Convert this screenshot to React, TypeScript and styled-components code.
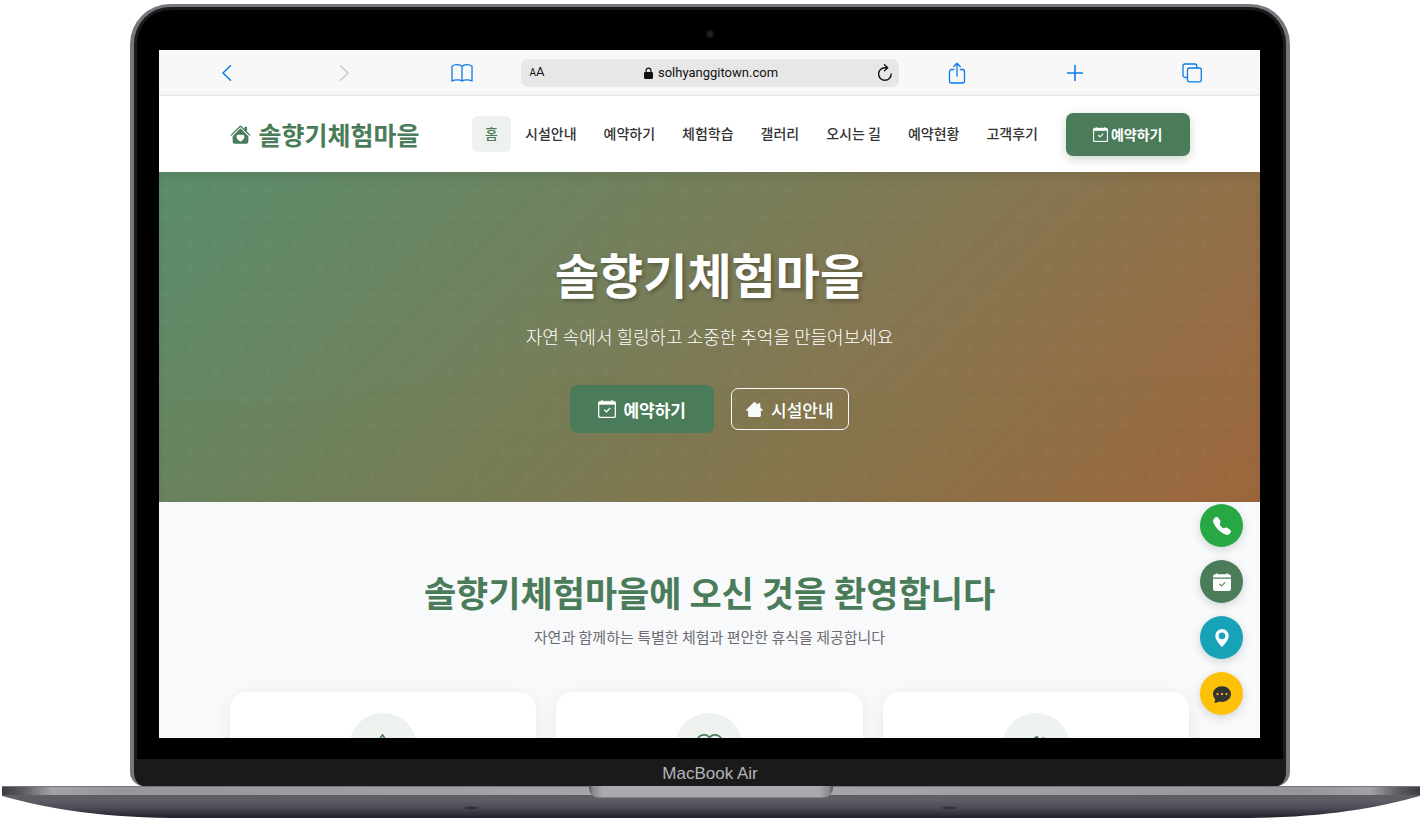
import React from 'react';
import styled, { createGlobalStyle, css } from 'styled-components';
import {
  BsCalendarCheck,
  BsCalendarCheckFill,
  BsChatDotsFill,
  BsGeoAltFill,
  BsHeart,
  BsHouseHeart,
  BsHouseHeartFill,
  BsTelephoneFill,
  BsTree,
} from 'react-icons/bs';

const green = '#4a7c59';
const blue = '#0a7aea';

const Global = createGlobalStyle`
  *, *::before, *::after { box-sizing: border-box; }
  body {
    margin: 0;
    background: #fff;
    color: #333;
    font-family: "Noto Sans CJK KR", "Noto Sans", sans-serif;
  }
  h1, h2, p { margin: 0; }
  button { font: inherit; border: 0; padding: 0; background: none; cursor: pointer; }
  a { color: inherit; text-decoration: none; }
  svg { display: block; flex: none; }
`;

/* ---------- laptop ---------- */

const Laptop = styled.div`
  display: flex;
  flex-direction: column;
  height: 100vh;
  min-height: 480px;
  padding: 4px 3px 3px 2px;
`;

const Lid = styled.div`
  flex: 1;
  min-height: 0;
  display: flex;
  flex-direction: column;
  margin: 0 130px 0 128px;
  border: solid #77777e;
  border-width: 3px 4px 0;
  border-radius: 40px 40px 14px 14px;
  background: #000;
  box-shadow: inset 0 0 0 3px #1b1b1e;
  overflow: hidden;
`;

const CameraBar = styled.div`
  height: 43px;
  flex: none;
  display: flex;
  align-items: center;
  justify-content: center;
  padding-top: 11px;
`;

const Camera = styled.span`
  width: 8px;
  height: 8px;
  border-radius: 50%;
  background: radial-gradient(circle, #26303a 0 1px, #15171a 2px 4px);
`;

const Screen = styled.div`
  flex: 1;
  min-height: 0;
  display: flex;
  flex-direction: column;
  margin: 0 26px 21px 25px;
  background: #fff;
  position: relative;
  overflow: hidden;
`;

const Chin = styled.div`
  height: 27px;
  flex: none;
  margin: 0 3px;
  background: #1a1a1a;
  border-radius: 0 0 12px 12px;
  text-align: center;
  color: #b4b4b9;
  font: 17px/30px "Liberation Sans", sans-serif;
`;

const Base = styled.div`
  height: 32px;
  flex: none;
  display: flex;
  justify-content: center;
  position: relative;
`;

const BaseShape = styled.svg`
  position: absolute;
  inset: 0;
  width: 100%;
  height: 100%;
`;

const Notch = styled.div`
  position: relative;
  width: 244px;
  height: 12px;
  border-radius: 0 0 10px 10px;
  background: linear-gradient(90deg, #55555b, #8a8a90 4px, #a9a9ae 14px, #a9a9ae 230px, #8a8a90 240px, #55555b);
  border-bottom: 1px solid #85858b;
`;

/* ---------- browser bar ---------- */

const BrowserBar = styled.div`
  flex: none;
  display: grid;
  grid-template-columns: repeat(3, 1fr) 378px repeat(3, 1fr);
  align-items: center;
  height: 46px;
  padding: 0 9px;
  background: #f8f8f8;
  border-bottom: 1px solid #ececec;
`;

const BarButton = styled.button<{ $muted?: boolean }>`
  display: flex;
  justify-content: center;
  color: ${(p) => (p.$muted ? '#c8c8ca' : blue)};
`;

const Address = styled.div`
  display: flex;
  align-items: center;
  justify-content: space-between;
  height: 28px;
  padding: 0 7px 0 9px;
  border-radius: 7px;
  background: #e7e7e7;
  color: #111;
  font: 13px/20px Roboto, sans-serif;
`;

const TextSize = styled.button`
  font-size: 13px;
  line-height: 20px;
  color: #111;
  small { font-size: 10px; }
`;

const Url = styled.span`
  display: flex;
  align-items: center;
  gap: 5px;
`;

const Reload = styled.button`
  color: #111;
`;

const line = {
  fill: 'none',
  stroke: 'currentColor',
  strokeLinecap: 'round' as const,
  strokeLinejoin: 'round' as const,
};

/* ---------- site ---------- */

const Container = styled.div`
  width: 100%;
  max-width: 960px;
  margin: 0 auto;
`;

const Header = styled.header`
  flex: none;
  background: #fff;
  position: relative;
  box-shadow: 0 2px 8px rgba(0, 0, 0, 0.12);
`;

const HeaderRow = styled(Container)`
  display: flex;
  align-items: center;
  justify-content: space-between;
  height: 76px;
`;

const Logo = styled.a`
  display: flex;
  align-items: center;
  gap: 8px;
  color: ${green};
  font-size: 25px;
  font-weight: 700;
  line-height: 36px;
`;

const Nav = styled.nav`
  display: flex;
  align-items: center;
  gap: 1px;
`;

const NavLink = styled.a<{ $active?: boolean }>`
  padding: 0 13px 2px;
  border-radius: 6px;
  font-size: 14px;
  font-weight: 500;
  line-height: 34px;
  white-space: nowrap;
  ${(p) => p.$active && css`
    color: ${green};
    background: #edf2ee;
  `}
`;

const Button = styled.button<{ $kind: 'header' | 'solid' | 'outline' }>`
  display: inline-flex;
  align-items: center;
  justify-content: center;
  color: #fff;
  border-radius: 7px;
  white-space: nowrap;
  ${(p) => p.$kind === 'header' && css`
    gap: 3px;
    height: 43px;
    margin-left: 14px;
    padding: 0 27px;
    background: ${green};
    font-size: 14px;
    font-weight: 700;
    box-shadow: 0 3px 10px rgba(74, 124, 89, 0.3);
  `}
  ${(p) => p.$kind === 'solid' && css`
    gap: 7px;
    height: 48px;
    padding: 0 28px;
    background: ${green};
    font-size: 17px;
    font-weight: 700;
  `}
  ${(p) => p.$kind === 'outline' && css`
    gap: 8px;
    height: 42px;
    padding: 0 14px;
    border: 1px solid #f8f9fa;
    font-size: 17px;
    font-weight: 500;
  `}
`;

const Hero = styled.section`
  flex: none;
  position: relative;
  display: flex;
  flex-direction: column;
  align-items: center;
  padding: 66px 16px 69px;
  background: linear-gradient(135deg, #5a8d6b, #7c7b56 50%, #a1663d);
  color: #fff;
  text-align: center;
  box-shadow: inset 0 4px 8px rgba(0, 0, 0, 0.08);
`;

const HeroArt = styled.svg`
  position: absolute;
  inset: 0;
  width: 100%;
  height: 100%;
`;

const HeroTitle = styled.h1`
  position: relative;
  font-size: 48px;
  font-weight: 700;
  line-height: 70px;
  text-shadow: 2px 2px 4px rgba(0, 0, 0, 0.3);
`;

const HeroText = styled.p`
  position: relative;
  margin-top: 14px;
  font-size: 18px;
  font-weight: 300;
  line-height: 28px;
`;

const Actions = styled.div`
  position: relative;
  display: flex;
  align-items: center;
  gap: 17px;
  margin-top: 35px;
`;

const Welcome = styled.section`
  flex: 1 0 auto;
  padding: 65px 0;
  background: #f8f9fb;
  text-align: center;
`;

const WelcomeTitle = styled.h2`
  color: ${green};
  font-size: 35px;
  font-weight: 700;
  line-height: 50px;
`;

const WelcomeText = styled.p`
  margin-top: 8px;
  color: #6c6c70;
  font-size: 15px;
  line-height: 24px;
`;

const Cards = styled.div`
  display: grid;
  grid-template-columns: repeat(3, 1fr);
  gap: 20px;
  margin-top: 43px;
`;

const Card = styled.article`
  display: flex;
  justify-content: center;
  height: 260px;
  padding-top: 21px;
  border-radius: 17px;
  background: #fff;
  box-shadow: 0 4px 17px rgba(0, 0, 0, 0.07);
`;

const CardIcon = styled.span`
  display: flex;
  align-items: center;
  justify-content: center;
  width: 68px;
  height: 68px;
  border-radius: 50%;
  background: #edf2ee;
  color: ${green};
`;

const Floating = styled.div`
  position: absolute;
  right: 17px;
  bottom: 23px;
  display: flex;
  flex-direction: column;
  gap: 13px;
`;

const Fab = styled.button<{ $bg: string; $dark?: boolean }>`
  display: flex;
  align-items: center;
  justify-content: center;
  width: 43px;
  height: 43px;
  border-radius: 50%;
  background: ${(p) => p.$bg};
  color: ${(p) => (p.$dark ? '#333' : '#fff')};
  box-shadow: 0 3px 10px rgba(0, 0, 0, 0.15);
`;

const links = ['홈', '시설안내', '예약하기', '체험학습', '갤러리', '오시는 길', '예약현황', '고객후기'];

export default function App() {
  return (
    <>
      <Global />
      <Laptop>
        <Lid>
          <CameraBar><Camera /></CameraBar>
          <Screen>
            <BrowserBar>
              <BarButton aria-label="뒤로">
                <svg width="20" height="20" viewBox="0 0 20 20" {...line} strokeWidth="1.5"><path d="M13.5 2.8 6 10l7.500 7.200" /></svg>
              </BarButton>
              <BarButton aria-label="앞으로" $muted>
                <svg width="20" height="20" viewBox="0 0 20 20" {...line} strokeWidth="1.5"><path d="M6.500 2.800 14 10l-7.500 7.200" /></svg>
              </BarButton>
              <BarButton aria-label="책갈피">
                <svg width="22" height="20" viewBox="0 0 22 20" {...line} strokeWidth="1.3"><path d="M11 3.400C9 1.200 3.500 1.200 1 3.200V18c2.500-1.600 8-1.600 10 0 2-1.600 7.500-1.600 10 0V3.200c-2.500-2-8-2-10 .2ZM11 3.400V18" /></svg>
              </BarButton>
              <Address>
                <TextSize aria-label="글자 크기"><small>A</small>A</TextSize>
                <Url>
                  <svg width="9" height="12" viewBox="0 0 9 12" fill="currentColor"><path d="M1.500 5V3.500a3 3 0 0 1 6 0V5h.3c.7 0 1.200.5 1.200 1.200v4.600c0 .7-.5 1.200-1.200 1.200H1.200C.5 12 0 11.500 0 10.800V6.200C0 5.500.5 5 1.200 5h.3Zm1.200 0h3.600V3.500a1.800 1.800 0 0 0-3.600 0V5Z" /></svg>
                  solhyanggitown.com
                </Url>
                <Reload aria-label="새로고침">
                  <svg width="14" height="18" viewBox="0 0 14 18" {...line} strokeWidth="1.4"><path d="M13.200 10A6.300 6.300 0 1 1 7 3.700h2.300M6.500.8l3.200 2.900-3.200 3" /></svg>
                </Reload>
              </Address>
              <BarButton aria-label="공유">
                <svg width="18" height="22" viewBox="0 0 18 22" {...line} strokeWidth="1.3"><path d="M5.800 7.500H3.500a2 2 0 0 0-2 2V19a2 2 0 0 0 2 2h11a2 2 0 0 0 2-2V9.500a2 2 0 0 0-2-2h-2.300M9 14V1.500M5.800 4.500 9 1.300l3.200 3.200" /></svg>
              </BarButton>
              <BarButton aria-label="새 탭">
                <svg width="18" height="18" viewBox="0 0 18 18" {...line} strokeWidth="1.600"><path d="M9 1.500v15M1.500 9h15" /></svg>
              </BarButton>
              <BarButton aria-label="탭 보기">
                <svg width="20" height="20" viewBox="0 0 20 20" {...line} strokeWidth="1.300"><rect x="5.500" y="5" width="13.800" height="13.800" rx="2" /><path d="M5.500 14.500H3a2 2 0 0 1-2-2V3a2 2 0 0 1 2-2h9.800a2 2 0 0 1 2 2v2" /></svg>
              </BarButton>
            </BrowserBar>

            <Header>
              <HeaderRow>
                <Logo href="#"><BsHouseHeartFill size={21} />솔향기체험마을</Logo>
                <Nav>
                  {links.map((label, i) => (
                    <NavLink key={label} href="#" $active={i === 0}>{label}</NavLink>
                  ))}
                  <Button $kind="header"><BsCalendarCheck size={15} strokeWidth={0.3} />예약하기</Button>
                </Nav>
              </HeaderRow>
            </Header>

            <Hero>
              <HeroArt aria-hidden="true">
                <defs>
                  <pattern id="plus" x="18" y="6" width="26" height="26" patternUnits="userSpaceOnUse">
                    <path d="M13 9v8M9 13h8" stroke="#fff" strokeOpacity="0.025" strokeWidth="2" />
                  </pattern>
                </defs>
                <rect width="100%" height="100%" fill="url(#plus)" />
                <svg width="100%" height="100%" viewBox="0 0 1100 330" preserveAspectRatio="none">
                  <path d="M0 222C70 238 130 235 200 222C300 204 360 200 430 203C560 210 620 228 740 222C860 214 960 196 1100 212V330H0Z" fill="#5f6f2a" fillOpacity="0.05" />
                </svg>
              </HeroArt>
              <HeroTitle>솔향기체험마을</HeroTitle>
              <HeroText>자연 속에서 힐링하고 소중한 추억을 만들어보세요</HeroText>
              <Actions>
                <Button $kind="solid"><BsCalendarCheck size={18} strokeWidth={0.3} />예약하기</Button>
                <Button $kind="outline">
                  <svg width="17" height="17" viewBox="0 0 16 16" fill="#f8f9fa"><path d="M8.700 1.200a1 1 0 0 0-1.400 0L.3 8.200a.5.5 0 0 0 .4.900H2v4.600c0 .7.6 1.300 1.300 1.300h9.400c.7 0 1.300-.6 1.300-1.300V9.100h1.300a.5.5 0 0 0 .4-.9L13.500 6V2.500A.5.5 0 0 0 13 2h-1.500a.5.5 0 0 0-.5.500v1Z" /></svg>
                  시설안내
                </Button>
              </Actions>
            </Hero>

            <Welcome>
              <Container>
                <WelcomeTitle>솔향기체험마을에 오신 것을 환영합니다</WelcomeTitle>
                <WelcomeText>자연과 함께하는 특별한 체험과 편안한 휴식을 제공합니다</WelcomeText>
                <Cards>
                  <Card><CardIcon><BsTree size={27} /></CardIcon></Card>
                  <Card><CardIcon><BsHeart size={27} /></CardIcon></Card>
                  <Card><CardIcon><BsHouseHeart size={27} /></CardIcon></Card>
                </Cards>
              </Container>
            </Welcome>

            <Floating>
              <Fab $bg="#28a745" aria-label="전화"><BsTelephoneFill size={18} /></Fab>
              <Fab $bg={green} aria-label="예약"><BsCalendarCheckFill size={18} /></Fab>
              <Fab $bg="#17a2b8" aria-label="위치"><BsGeoAltFill size={18} /></Fab>
              <Fab $bg="#ffc107" $dark aria-label="채팅"><BsChatDotsFill size={18} /></Fab>
            </Floating>
          </Screen>
          <Chin>MacBook Air</Chin>
        </Lid>
        <Base>
          <BaseShape viewBox="0 0 1418 32" preserveAspectRatio="none" aria-hidden="true">
            <defs>
              <linearGradient id="body" x1="0" y1="0" x2="0" y2="1">
                <stop offset="0.25" stopColor="#5e5e65" />
                <stop offset="0.6" stopColor="#4a4a54" />
                <stop offset="1" stopColor="#20202b" />
              </linearGradient>
              <linearGradient id="edge">
                <stop offset="0" stopColor="#3c3c44" />
                <stop offset="0.015" stopColor="#5c5c63" />
                <stop offset="0.035" stopColor="#a2a2a8" />
                <stop offset="0.08" stopColor="#96969c" />
                <stop offset="0.5" stopColor="#a8a8ad" />
                <stop offset="0.92" stopColor="#96969c" />
                <stop offset="0.965" stopColor="#a2a2a8" />
                <stop offset="0.985" stopColor="#5c5c63" />
                <stop offset="1" stopColor="#3c3c44" />
              </linearGradient>
            </defs>
            <path d="M0 8 0 10C40 21 90 31 170 32H1248C1328 31 1378 21 1418 10V8Z" fill="url(#body)" />
            <path d="M0 0H1418V9H0Z" fill="url(#edge)" />
            <path d="M0 0H1418V1H0Z" fill="#77777d" />
            <ellipse cx="469" cy="22" rx="7" ry="1.500" fill="#30303a" />
            <ellipse cx="947" cy="22" rx="7" ry="1.500" fill="#30303a" />
          </BaseShape>
          <Notch />
        </Base>
      </Laptop>
    </>
  );
}
